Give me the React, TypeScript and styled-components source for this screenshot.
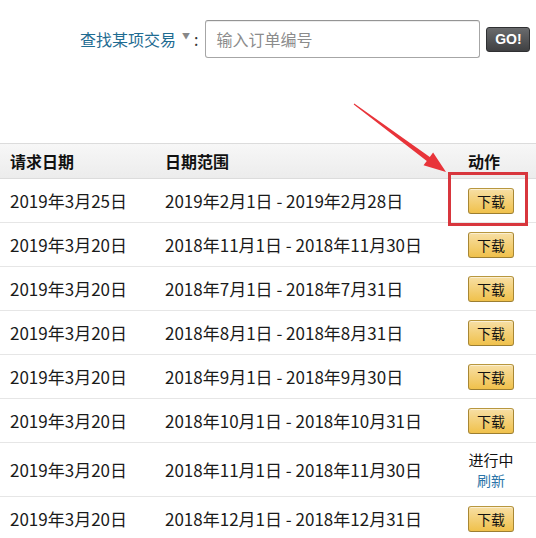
import React from "react";
import styled, { createGlobalStyle } from "styled-components";

const Global = createGlobalStyle`
  html, body { margin: 0; padding: 0; background: #fff; }
  body { font-family: "Noto Sans CJK SC", "Noto Sans", sans-serif; color: #111; }
`;

const Page = styled.div`
  position: relative;
  width: 536px;
  height: 538px;
  overflow: hidden;
`;

const SearchBar = styled.div`
  display: flex;
  align-items: center;
  height: 38px;
  padding: 20px 0 0 80px;
`;

const FindLink = styled.span`
  color: #1f6c92;
  font-size: 16px;
  line-height: 1;
`;

const Caret = styled.span`
  color: #888;
  font-size: 8px;
  margin-left: 6px;
  align-self: flex-start;
  margin-top: 10px;
`;

const Colon = styled.span`
  font-size: 16px;
  color: #333;
  margin: 0 7px 0 4px;
`;

const Input = styled.div`
  box-sizing: border-box;
  width: 275px;
  height: 38px;
  border: 1px solid #a6a6a6;
  border-top-color: #949494;
  border-radius: 3px;
  box-shadow: inset 0 1px 0 rgba(0, 0, 0, 0.07);
  display: flex;
  align-items: center;
  padding-left: 10px;
  color: #8c8c8c;
  font-size: 16px;
`;

const GoButton = styled.div`
  box-sizing: border-box;
  margin-left: 6px;
  width: 44px;
  height: 25px;
  border-radius: 3px;
  border: 1px solid #2f3032;
  background: linear-gradient(#6a6b6d, #3f4042);
  color: #fff;
  font-family: "Liberation Sans", Arial, sans-serif;
  font-weight: bold;
  font-size: 14px;
  display: flex;
  align-items: center;
  justify-content: center;
`;

const Table = styled.div`
  margin-top: 85px;
  display: grid;
  grid-template-columns: 155px 303px 1fr;
`;

const HeadCell = styled.div<{ $pl: number }>`
  height: 36px;
  box-sizing: border-box;
  border-top: 1px solid #dcdcdc;
  border-bottom: 1px solid #dcdcdc;
  background: linear-gradient(#f7f7f7, #ececec);
  display: flex;
  align-items: center;
  font-weight: bold;
  font-size: 16px;
  color: #111;
  padding-left: ${(p) => p.$pl}px;
`;

const Cell = styled.div<{ $pl: number; $tall?: boolean }>`
  height: ${(p) => (p.$tall ? 54 : 44)}px;
  box-sizing: border-box;
  border-bottom: 1px solid #e6e6e6;
  display: flex;
  align-items: center;
  font-size: 17px;
  color: #1a1a1a;
  padding-left: ${(p) => p.$pl}px;
  white-space: nowrap;
`;

const DownloadButton = styled.div`
  box-sizing: border-box;
  width: 46px;
  height: 26px;
  border-radius: 3px;
  border: 1px solid #a88734;
  border-color: #b8973e #a88734 #9c7e31;
  background: linear-gradient(#f7dfa5, #f0c14b);
  box-shadow: inset 0 1px 0 rgba(255, 255, 255, 0.5);
  display: flex;
  align-items: center;
  justify-content: center;
  font-size: 14px;
  color: #111;
`;

const Pending = styled.div`
  display: flex;
  flex-direction: column;
  align-items: center;
  width: 50px;
  margin-left: -2px;
`;

const PendingText = styled.div`
  font-size: 15px;
  line-height: 20px;
  height: 20px;
  color: #111;
`;

const RefreshLink = styled.div`
  font-size: 14px;
  line-height: 20px;
  height: 20px;
  color: #2a74a8;
`;

const Highlight = styled.div`
  position: absolute;
  left: 448px;
  top: 172px;
  width: 80px;
  height: 54px;
  box-sizing: border-box;
  border: 3px solid #d8363d;
`;

const ArrowSvg = styled.svg`
  position: absolute;
  left: 0;
  top: 0;
  pointer-events: none;
`;

type Row = { req: string; range: string; pending?: boolean };

const rows: Row[] = [
  { req: "2019年3月25日", range: "2019年2月1日 - 2019年2月28日" },
  { req: "2019年3月20日", range: "2018年11月1日 - 2018年11月30日" },
  { req: "2019年3月20日", range: "2018年7月1日 - 2018年7月31日" },
  { req: "2019年3月20日", range: "2018年8月1日 - 2018年8月31日" },
  { req: "2019年3月20日", range: "2018年9月1日 - 2018年9月30日" },
  { req: "2019年3月20日", range: "2018年10月1日 - 2018年10月31日" },
  { req: "2019年3月20日", range: "2018年11月1日 - 2018年11月30日", pending: true },
  { req: "2019年3月20日", range: "2018年12月1日 - 2018年12月31日" },
];

export default function App() {
  return (
    <Page>
      <Global />
      <SearchBar>
        <FindLink>查找某项交易</FindLink>
        <Caret>▼</Caret>
        <Colon>:</Colon>
        <Input>输入订单编号</Input>
        <GoButton>GO!</GoButton>
      </SearchBar>
      <Table>
        <HeadCell $pl={10}>请求日期</HeadCell>
        <HeadCell $pl={10}>日期范围</HeadCell>
        <HeadCell $pl={10}>动作</HeadCell>
        {rows.map((r, i) => (
          <React.Fragment key={i}>
            <Cell $pl={10} $tall={r.pending}>{r.req}</Cell>
            <Cell $pl={10} $tall={r.pending}>{r.range}</Cell>
            <Cell $pl={10} $tall={r.pending}>
              {r.pending ? (
                <Pending>
                  <PendingText>进行中</PendingText>
                  <RefreshLink>刷新</RefreshLink>
                </Pending>
              ) : (
                <DownloadButton>下载</DownloadButton>
              )}
            </Cell>
          </React.Fragment>
        ))}
      </Table>
      <Highlight />
      <ArrowSvg width="536" height="538" viewBox="0 0 536 538">
        <polygon
          points="353.7,104.4 426.8,160.9 423.5,165.3 446,172 433.1,152.5 429.8,156.9 354.3,103.6"
          fill="#e8343a"
        />
      </ArrowSvg>
    </Page>
  );
}
